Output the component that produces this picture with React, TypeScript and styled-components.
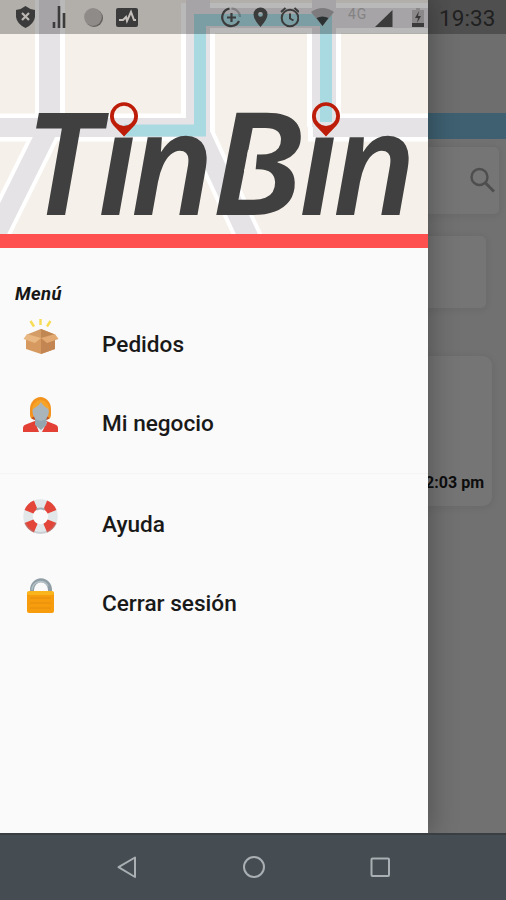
import React from "react";
import styled, { createGlobalStyle } from "styled-components";

const GlobalStyle = createGlobalStyle`
  * { box-sizing: border-box; }
  body { margin: 0; font-family: Roboto, "Liberation Sans", sans-serif; }
`;

const Screen = styled.div`
  position: relative;
  width: 506px;
  height: 900px;
  display: flex;
  flex-direction: column;
  overflow: hidden;
  background: #454d53;
`;

const Stage = styled.main`
  position: relative;
  height: 833px;
  overflow: hidden;
`;

const OrdersPage = styled.section`
  height: 100%;
  display: flex;
  flex-direction: column;
  align-items: flex-end;
  background: #717171;
`;

const PageHeader = styled.div`
  width: 100%;
  height: 113px;
  flex: none;
  background: #6e6e6e;
`;

const PageStripe = styled.div`
  width: 100%;
  height: 26px;
  flex: none;
  background: #3e6071;
`;

const Card = styled.div<{ $height: number; $top: number; $right: number; $radius: number }>`
  width: 200px;
  flex: none;
  height: ${(p) => p.$height}px;
  margin: ${(p) => p.$top}px ${(p) => p.$right}px 0 0;
  border-radius: ${(p) => p.$radius}px;
  background: #757575;
  box-shadow: 0 1px 7px 1px rgba(0, 0, 0, 0.07);
  display: flex;
  justify-content: flex-end;
`;

const SearchIcon = styled.svg`
  width: 26px;
  height: 26px;
  margin: 20px 4px 0 0;
`;

const OrderTime = styled.span`
  align-self: flex-end;
  margin: 0 8px 14px 0;
  font-size: 16px;
  line-height: 19px;
  font-weight: 700;
  color: #0d0d0d;
`;

const Drawer = styled.aside`
  position: absolute;
  inset: 0 auto 0 0;
  width: 428px;
  display: flex;
  flex-direction: column;
  background: #fafafa;
  box-shadow: 0 0 26px 2px rgba(0, 0, 0, 0.3);
`;

const DrawerHeader = styled.header`
  height: 248px;
  flex: none;
  border-bottom: 14px solid #ff5050;
`;

const Banner = styled.svg`
  display: block;
  width: 428px;
  height: 234px;
`;

const Wordmark = styled.g`
  font-family: "Noto Sans", "Open Sans", sans-serif;
  font-size: 143px;
  font-style: italic;
  font-weight: 560;
  fill: #404040;
`;

const MenuTitle = styled.h2`
  margin: 36px 0 0 15px;
  font-size: 18.4px;
  letter-spacing: 0.4px;
  line-height: 20px;
  font-style: italic;
  font-weight: 700;
  color: #161616;
`;

const MenuGroup = styled.nav<{ $top: number; $bottom: number }>`
  display: flex;
  flex-direction: column;
  padding: ${(p) => p.$top}px 0 ${(p) => p.$bottom}px;
`;

const MenuItem = styled.a`
  display: flex;
  align-items: center;
  height: 79px;
  padding-left: 21px;
  font-size: 22.6px;
  font-weight: 500;
  color: #191919;
`;

const MenuIcon = styled.svg`
  width: 40px;
  height: 40px;
  margin: -12px 41px 0 0;
  overflow: visible;
`;

const Divider = styled.hr`
  width: 100%;
  height: 1px;
  margin: 0;
  border: 0;
  background: #f5f5f5;
`;

const StatusBar = styled.div`
  position: absolute;
  inset: 0 0 auto 0;
  height: 34px;
  padding-left: 15px;
  display: flex;
  align-items: center;
  background: rgba(0, 0, 0, 0.275);
  color: #3b3b3b;
`;

const StatusIcon = styled.svg<{ $gap: number; $w: number }>`
  flex: none;
  width: ${(p) => p.$w}px;
  height: 34px;
  margin-right: ${(p) => p.$gap}px;
`;

const Network = styled.span`
  width: 21px;
  margin: -7px 6px 0 -1px;
  font-size: 14px;
  letter-spacing: 1px;
  color: #858283;
`;

const Clock = styled.span`
  font-size: 22.5px;
  letter-spacing: 0.1px;
  margin-top: 2px;
  color: #202020;
`;

const NavBar = styled.footer`
  height: 67px;
  display: flex;
  align-items: center;
  justify-content: space-between;
  padding: 0 113px 2px 114px;
  border-top: 2px solid #393e42;
  background: #454d53;
`;

const NavIcon = styled.svg`
  width: 26px;
  height: 26px;
  fill: none;
  stroke: #a9afb2;
  stroke-width: 2;
  stroke-linejoin: round;
`;

const Pin = ({ x }: { x: number }) => (
  <g transform={`translate(${x} 116)`}>
    <path
      fillRule="evenodd"
      d="M0 20.500L-10.500 9.500A14 14 0 1 1 10.500 9.500Z M0 -10.300A10.200 10.200 0 1 0 0 10.100A10.200 10.200 0 1 0 0 -10.300Z"
      fill="#bd1c08"
    />
  </g>
);

const MapBanner = () => (
  <Banner viewBox="0 0 428 234">
    <defs>
      <clipPath id="wordmark">
        <path
          clipRule="evenodd"
          d="M0 0H428V234H0Z M111 100H150V137H111Z M304 100H350V137H304Z M248 150H257.500L255.500 171H244Z"
        />
      </clipPath>
    </defs>
    <rect width="428" height="234" fill="#f5f0e9" />
    <g fill="none">
      <g stroke="#fff">
        <path d="M49 127L-13 252 M197 127L252 245" strokeWidth="28" />
        <path d="M50 0V127" strokeWidth="30" />
        <path d="M0 127.500H215 M308 127.500H428" strokeWidth="28" />
        <path d="M198 4V127 M324 4V127" strokeWidth="34" />
        <path d="M181 18H428" strokeWidth="30" />
      </g>
      <g stroke="#e5e3e6">
        <path d="M49 127L-13 252 M197 127L252 245" strokeWidth="20" />
        <path d="M49.500 0V127" strokeWidth="21" />
        <path d="M0 127.500H210 M313 127.500H428" strokeWidth="19" />
        <path d="M198 0V127 M324 0V127" strokeWidth="24" />
        <path d="M186 18H428" strokeWidth="20" />
      </g>
      <path d="M124 130.500H200V20H326V122" stroke="#a9dae1" strokeWidth="12" />
    </g>
    <Wordmark clipPath="url(#wordmark)">
      <text transform="translate(0 215) skewX(2)" x="27 98 131" y="0">Tin</text>
      <text transform="translate(211.500 215) skewX(1.500) scale(1.060 1)" x="0" y="0">B</text>
      <text transform="translate(0 215) skewX(2)" x="299 333" y="0">in</text>
    </Wordmark>
    <Pin x={124} />
    <Pin x={326} />
  </Banner>
);

const BoxIcon = () => (
  <MenuIcon viewBox="0 0 40 40">
    <path d="M9.500 2L13 7.500M19.500 0V6M29.500 2L26 7.500" stroke="#f8dc54" strokeWidth="2.400" />
    <path d="M5 18L20 10L34 18V30L20 35L5 30Z" fill="#d69a60" />
    <path d="M20 20L34 17V30L20 35Z" fill="#c38652" />
    <path d="M6 15.500L20 10L34 15.500L20 20Z" fill="#d49c66" />
    <path d="M20 10L34 15.500L20 20Z" fill="#c08752" />
    <path d="M6 15L2.500 20L14 24L20 19Z" fill="#e9b781" />
    <path d="M34 15L37.500 20L26 24L20 19Z" fill="#e2aa72" />
  </MenuIcon>
);

const PersonIcon = () => (
  <MenuIcon viewBox="0 0 40 40">
    <path d="M11 21Q9 20 9 16V11C9 4 14 -1 19.500 -1S30 4 30 11V16Q30 20 28 21Z" fill="#f3931e" />
    <path d="M10.500 20Q12 22.500 15 22V17ZM28.500 20Q27 22.500 24 22V17Z" fill="#bd5327" />
    <path d="M2 34V30Q2 27 6 26L15 22.500H24L33 26Q37 27 37 30V34Z" fill="#e34036" />
    <path d="M14 24L18 34H21L26 24Z" fill="#eef1f3" />
    <path d="M14 20H25.500V27L20 32L14 27Z" fill="#93a5ae" />
    <ellipse cx="19.700" cy="13.500" rx="8.200" ry="9.500" fill="#a9b5bb" />
    <path d="M11 12C12 5 16 2 20 2S28 6 28.500 12C25 9 22 8 20 4C18 8 14 9 11 12Z" fill="#f6a32a" />
  </MenuIcon>
);

const LifebuoyIcon = () => (
  <MenuIcon viewBox="0 0 40 40">
    <circle cx="19.500" cy="17.500" r="12.500" fill="none" stroke="#e2e7e9" strokeWidth="9.500" />
    <circle cx="19.500" cy="17.500" r="12.500" fill="none" stroke="#e34638" strokeWidth="9.500" pathLength="80" strokeDasharray="10 10" strokeDashoffset="-5" />
    <path d="M4 24A17 17 0 0 0 35 24" fill="none" stroke="#8d999f" strokeOpacity=".3" strokeWidth="2" />
    <path d="M15.500 10.500Q19.500 8.500 23.500 10.500" fill="none" stroke="#a5b0b6" strokeWidth="2" />
  </MenuIcon>
);

const LockIcon = () => (
  <MenuIcon viewBox="0 0 40 40">
    <path d="M11 16V12A8.700 9.500 0 0 1 29 12V16" fill="none" stroke="#8f9ea5" strokeWidth="4" />
    <path d="M11 12A8.700 9.500 0 0 1 27 8" fill="none" stroke="#b4c1c6" strokeWidth="1.500" />
    <rect x="6" y="14" width="27" height="21" rx="2" fill="#f79d0d" />
    <rect x="6" y="13" width="27" height="4" rx="2" fill="#f9b51b" />
    <path d="M9 20H30M9 25H30M9 30H30" stroke="#ec920f" strokeWidth="1.300" />
  </MenuIcon>
);

export default function App() {
  return (
    <Screen>
      <GlobalStyle />
      <Stage>
        <OrdersPage>
          <PageHeader />
          <PageStripe />
          <Card $height={67} $top={8} $right={7} $radius={5}>
            <SearchIcon viewBox="0 0 26 26" fill="none" stroke="#4e4e4e" strokeWidth="2.400">
              <circle cx="10.500" cy="10" r="8" />
              <path d="M16 15.500L25 24.500" strokeWidth="3" />
            </SearchIcon>
          </Card>
          <Card $height={72} $top={22} $right={20} $radius={5} />
          <Card $height={150} $top={48} $right={14} $radius={9}>
            <OrderTime>12:03 pm</OrderTime>
          </Card>
        </OrdersPage>
        <Drawer>
          <DrawerHeader>
            <MapBanner />
          </DrawerHeader>
          <MenuTitle>Menú</MenuTitle>
          <MenuGroup $top={1} $bottom={10}>
            <MenuItem><BoxIcon />Pedidos</MenuItem>
            <MenuItem><PersonIcon />Mi negocio</MenuItem>
          </MenuGroup>
          <Divider />
          <MenuGroup $top={11} $bottom={0}>
            <MenuItem><LifebuoyIcon />Ayuda</MenuItem>
            <MenuItem><LockIcon />Cerrar sesión</MenuItem>
          </MenuGroup>
        </Drawer>
      </Stage>
      <NavBar>
        <NavIcon viewBox="0 0 26 26"><path d="M21 3.500V23L4.500 13.200Z" /></NavIcon>
        <NavIcon viewBox="0 0 26 26"><circle cx="13" cy="13" r="10" /></NavIcon>
        <NavIcon viewBox="0 0 26 26"><rect x="4.500" y="4.500" width="17.500" height="17.500" rx="1" /></NavIcon>
      </NavBar>
      <StatusBar>
        <StatusIcon $w={21} $gap={16} viewBox="0 0 21 34">
          <path d="M1 10Q7 9 10.500 6Q14 9 20 10V17Q19 24 10.500 28Q2 24 1 17Z" fill="currentColor" />
          <path d="M7 13L14 20M14 13L7 20" stroke="#bbb7b3" strokeWidth="2.200" />
        </StatusIcon>
        <StatusIcon $w={14} $gap={17} viewBox="0 0 14 34">
          <path d="M2 22V28M7 6V28M12 13V28" stroke="currentColor" strokeWidth="2.600" />
        </StatusIcon>
        <StatusIcon $w={20} $gap={13} viewBox="0 0 20 34">
          <circle cx="11" cy="18" r="9" fill="#625f5d" />
          <circle cx="10" cy="17" r="8.900" fill="#8f8b88" />
        </StatusIcon>
        <StatusIcon $w={22} $gap={83} viewBox="0 0 22 34">
          <rect y="8" width="22" height="19" rx="2" fill="currentColor" />
          <path d="M3 20H7L10 17L11 21L15 12L18 20H20" fill="none" stroke="#c4bfbb" strokeWidth="2" />
        </StatusIcon>
        <StatusIcon $w={20} $gap={12} viewBox="0 0 20 34" fill="none" stroke="currentColor" strokeWidth="2.200">
          <path d="M8.500 8.600A8.800 8.800 0 1 0 18 21" />
          <path d="M10.500 8.400A9 9 0 0 1 19 17" strokeOpacity=".35" />
          <path d="M10.500 13V22M6 17.500H15" />
        </StatusIcon>
        <StatusIcon $w={15} $gap={11} viewBox="0 0 15 34">
          <path fillRule="evenodd" d="M7.500 27Q.5 19 .5 14.500A7 7 0 0 1 14.500 14.500Q14.500 19 7.500 27ZM7.500 12A2.400 2.400 0 1 0 7.500 16.800A2.400 2.400 0 1 0 7.500 12Z" fill="currentColor" />
        </StatusIcon>
        <StatusIcon $w={20} $gap={12} viewBox="0 0 20 34" fill="none" stroke="currentColor" strokeWidth="2">
          <circle cx="11" cy="18" r="8.300" />
          <path d="M11 13.500V18.500L14.500 20.500M2 12L6.500 8M20 12L15.500 8" />
        </StatusIcon>
        <StatusIcon $w={24} $gap={14} viewBox="0 0 24 34">
          <path d="M0 12Q11.500 4 23 12L11.500 26Z" fill="#7d7b7d" />
          <path d="M5.500 18Q11.500 15 17.500 18L11.500 26Z" fill="#2b3133" />
        </StatusIcon>
        <Network>4G</Network>
        <StatusIcon $w={18} $gap={19} viewBox="0 0 18 34">
          <path d="M0 27L17.500 10V27Z" fill="currentColor" />
        </StatusIcon>
        <StatusIcon $w={14} $gap={13} viewBox="0 0 14 34">
          <path d="M4 8H8V10H12V23H0V10H4Z" fill="#8b8889" />
          <path d="M0 23H12V27H0Z" fill="currentColor" />
          <path d="M7 11L3 18H6L5 23L9 16H6Z" fill="#383838" />
        </StatusIcon>
        <Clock>19:33</Clock>
      </StatusBar>
    </Screen>
  );
}
